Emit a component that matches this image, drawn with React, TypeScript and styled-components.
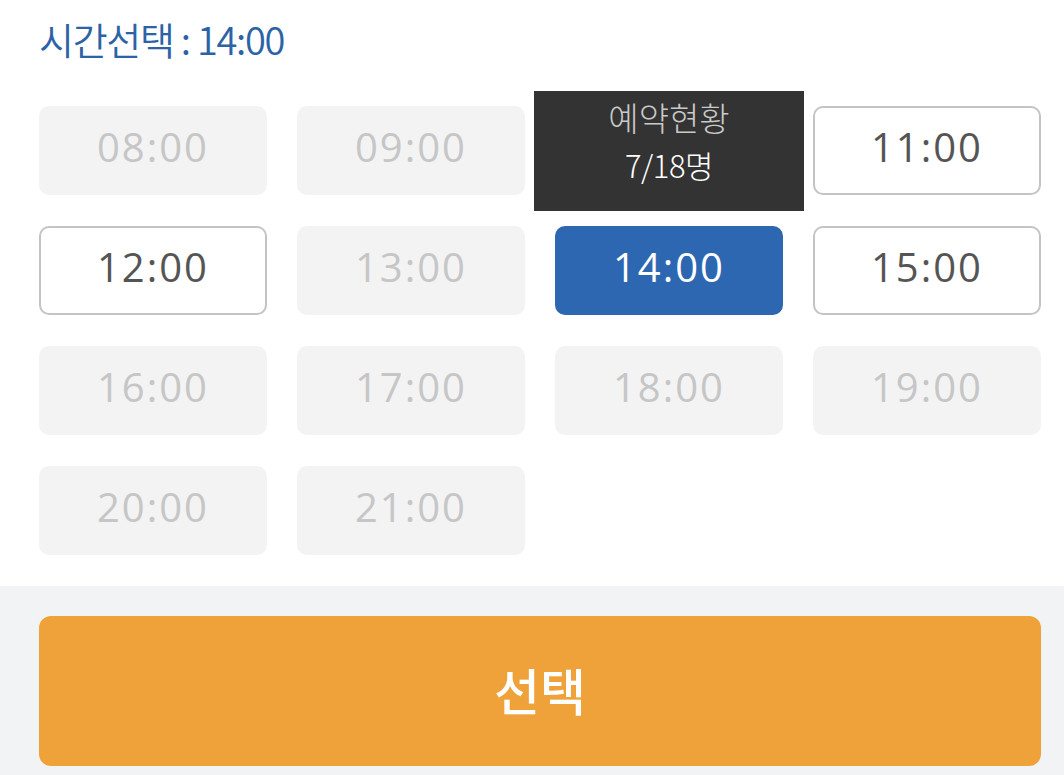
import styled, { createGlobalStyle, css } from 'styled-components';

type SlotState = 'disabled' | 'open' | 'selected';

type Slot = {
    time: string;
    state: SlotState;
    booked?: string;
};

const slots: Slot[] = [
    { time: '08:00', state: 'disabled' },
    { time: '09:00', state: 'disabled' },
    { time: '10:00', state: 'disabled', booked: '7/18명' },
    { time: '11:00', state: 'open' },
    { time: '12:00', state: 'open' },
    { time: '13:00', state: 'disabled' },
    { time: '14:00', state: 'selected' },
    { time: '15:00', state: 'open' },
    { time: '16:00', state: 'disabled' },
    { time: '17:00', state: 'disabled' },
    { time: '18:00', state: 'disabled' },
    { time: '19:00', state: 'disabled' },
    { time: '20:00', state: 'disabled' },
    { time: '21:00', state: 'disabled' },
];

const GlobalStyle = createGlobalStyle`
    html, body {
        margin: 0;
        padding: 0;
        background: #ffffff;
    }
    body {
        font-family: 'Noto Sans CJK KR', 'Noto Sans', sans-serif;
    }
`;

const Page = styled.div`
    width: 1064px;
    height: 775px;
    display: flex;
    flex-direction: column;
    overflow: hidden;
`;

const Picker = styled.section`
    flex: 1;
    padding: 14px 23px 30px 39px;
    display: flex;
    flex-direction: column;
`;

const Heading = styled.h2`
    margin: 0;
    font-family: 'Noto Sans CJK KR', sans-serif;
    font-size: 38px;
    font-weight: 350;
    letter-spacing: -1.3px;
    line-height: 50px;
    color: #2c63a6;
`;

const Grid = styled.div`
    margin-top: 42px;
    display: grid;
    grid-template-columns: repeat(4, 228px);
    grid-auto-rows: 89px;
    column-gap: 30px;
    row-gap: 31px;
`;

const slotStyles: Record<SlotState, ReturnType<typeof css>> = {
    disabled: css`
        background: #f3f3f4;
        color: #c6c6c6;
        border: 2px solid #f3f3f4;
    `,
    open: css`
        background: #ffffff;
        color: #555555;
        border: 2px solid #c4c4c6;
    `,
    selected: css`
        background: #2d66b1;
        color: #ffffff;
        border: 2px solid #2d66b1;
    `,
};

const SlotButton = styled.div<{ $state: SlotState }>`
    position: relative;
    box-sizing: border-box;
    border-radius: 10px;
    display: flex;
    align-items: center;
    justify-content: center;
    font-family: 'Open Sans', 'Noto Sans CJK KR', sans-serif;
    font-size: 40px;
    font-weight: 370;
    letter-spacing: 2px;
    padding-bottom: 8px;
    ${({ $state }) => slotStyles[$state]}
`;

// the time under an open tooltip is covered, so it is kept but not painted
const SlotTime = styled.span<{ $covered?: boolean }>`
    visibility: ${({ $covered }) => ($covered ? 'hidden' : 'visible')};
`;

const Tooltip = styled.div`
    position: absolute;
    left: -23px;
    right: -23px;
    top: -17px;
    bottom: -18px;
    background: #333333;
    display: flex;
    flex-direction: column;
    align-items: center;
    justify-content: center;
    font-family: 'Noto Sans CJK KR', sans-serif;
    font-weight: 300;
    letter-spacing: 0;
    line-height: 47px;
    padding-bottom: 20px;
`;

const TooltipLabel = styled.div`
    color: #c9c9c9;
    font-size: 33px;
`;

const TooltipValue = styled.div`
    color: #ffffff;
    font-size: 31px;
    letter-spacing: -0.5px;
`;

const Footer = styled.footer`
    height: 189px;
    box-sizing: border-box;
    background: #f2f3f5;
    padding: 30px 23px 9px 39px;
    display: flex;
`;

const SubmitButton = styled.button`
    flex: 1;
    border: none;
    border-radius: 12px;
    background: #efa23a;
    color: #ffffff;
    font-family: 'Noto Sans CJK KR', sans-serif;
    font-size: 50px;
    font-weight: 500;
    padding-bottom: 6px;
    cursor: pointer;
`;

const App = () => (
    <Page>
        <GlobalStyle />
        <Picker>
            <Heading>시간선택 : 14:00</Heading>
            <Grid>
                {slots.map(slot => (
                    <SlotButton key={slot.time} $state={slot.state}>
                        <SlotTime $covered={!!slot.booked}>{slot.time}</SlotTime>
                        {slot.booked && (
                            <Tooltip>
                                <TooltipLabel>예약현황</TooltipLabel>
                                <TooltipValue>{slot.booked}</TooltipValue>
                            </Tooltip>
                        )}
                    </SlotButton>
                ))}
            </Grid>
        </Picker>
        <Footer>
            <SubmitButton>선택</SubmitButton>
        </Footer>
    </Page>
);

export default App;
